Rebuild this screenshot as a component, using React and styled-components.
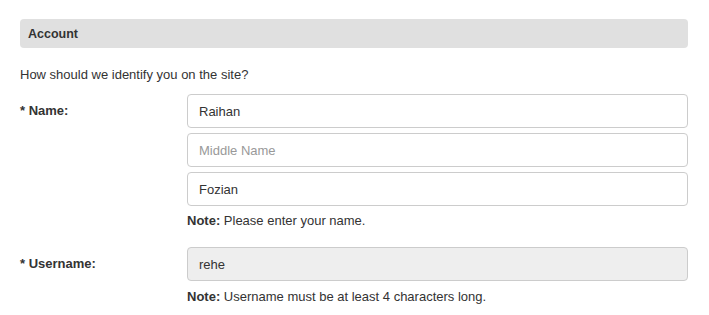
import React from "react";
import styled, { createGlobalStyle } from "styled-components";

const Global = createGlobalStyle`
  html, body { margin: 0; padding: 0; background: #fff; }
  body { font-family: "Liberation Sans", Arial, sans-serif; color: #333; font-size: 13px; }
  * { box-sizing: border-box; }
`;

const Page = styled.div`
  padding: 19px 21px 0 20px;
`;

const SectionHeader = styled.div`
  background: #e0e0e0;
  border-radius: 4px;
  height: 29px;
  display: flex;
  align-items: center;
  padding: 0 8px;
  font-weight: bold;
  font-size: 12.5px;
  color: #333;
`;

const Intro = styled.p`
  margin: 18px 0 10px;
  font-size: 13px;
  line-height: 18px;
`;

const Row = styled.div`
  display: grid;
  grid-template-columns: 167px 1fr;
  margin-bottom: ${(p) => p.$mb || 0}px;
`;

const Label = styled.div`
  font-weight: bold;
  font-size: 13px;
  padding-top: 9px;
  line-height: 16px;
`;

const Fields = styled.div`
  display: flex;
  flex-direction: column;
  gap: 5px;
`;

const Input = styled.input`
  height: 34px;
  width: 100%;
  border: 1px solid #ccc;
  border-radius: 4px;
  padding: 0 11px;
  font-family: "Liberation Sans", Arial, sans-serif;
  font-size: 13px;
  color: #333;
  background: ${(p) => (p.readOnly ? "#eee" : "#fff")};
  outline: none;
  &::placeholder { color: #999; }
`;

const Note = styled.div`
  margin-top: ${(p) => p.$mt || 6}px;
  font-size: 13px;
  line-height: 18px;
  b { font-weight: bold; }
`;

export default function App() {
  return (
    <>
      <Global />
      <Page>
        <SectionHeader>Account</SectionHeader>
        <Intro>How should we identify you on the site?</Intro>
        <Row $mb={17}>
          <Label>* Name:</Label>
          <Fields>
            <Input defaultValue="Raihan" />
            <Input placeholder="Middle Name" />
            <Input defaultValue="Fozian" />
            <Note $mt={1}><b>Note:</b> Please enter your name.</Note>
          </Fields>
        </Row>
        <Row>
          <Label>* Username:</Label>
          <Fields>
            <Input defaultValue="rehe" readOnly />
            <Note $mt={2}><b>Note:</b> Username must be at least 4 characters long.</Note>
          </Fields>
        </Row>
      </Page>
    </>
  );
}
